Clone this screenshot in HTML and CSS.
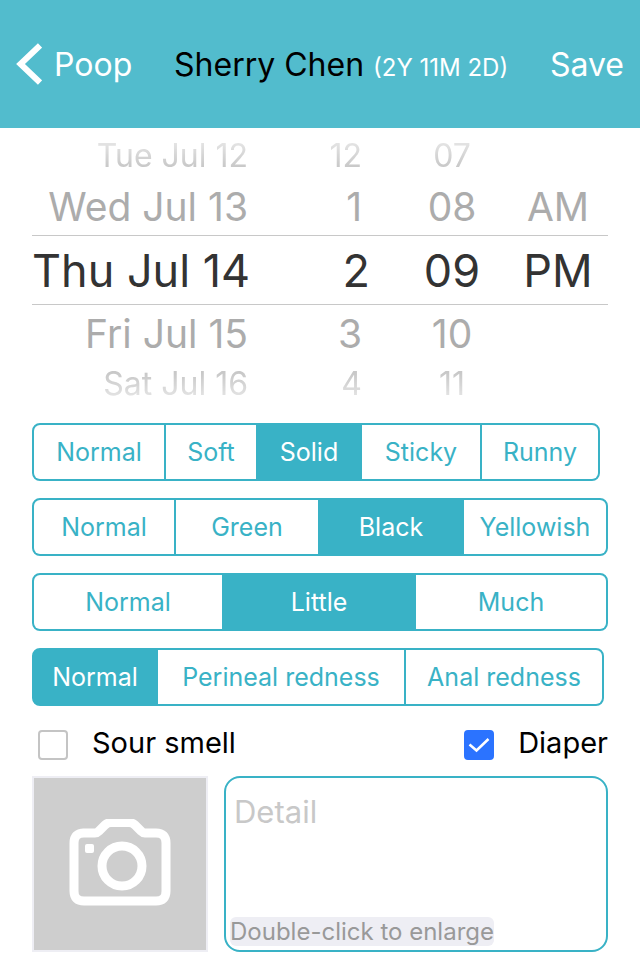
FILE: index.html
```
<!DOCTYPE html>
<html lang="en">
<head>
    <meta charset="UTF-8">
    <meta name="viewport" content="width=device-width, initial-scale=1">
    <title>Poop - Sherry Chen</title>
    <link rel="stylesheet" href="styles.css">
</head>
<body>
    <header class="navbar">
        <a href="#" class="back">
            <svg class="back-icon" viewBox="0 0 26 42" aria-hidden="true"><path d="M24 2.500 4.500 21 24 39.500" fill="none" stroke="#fff" stroke-width="6"/></svg>
            Poop
        </a>
        <h1>Sherry Chen <small>(2Y 11M 2D)</small></h1>
        <button type="button" class="save">Save</button>
    </header>

    <form class="record">
        <!-- date and time wheels -->
        <div class="picker">
            <ul class="wheel wheel-date" aria-label="Date">
                <li class="far above">Tue Jul 12</li>
                <li class="near">Wed Jul 13</li>
                <li class="current">Thu Jul 14</li>
                <li class="near">Fri Jul 15</li>
                <li class="far below">Sat Jul 16</li>
            </ul>
            <ul class="wheel wheel-hour" aria-label="Hour">
                <li class="far above">12</li>
                <li class="near">1</li>
                <li class="current">2</li>
                <li class="near">3</li>
                <li class="far below">4</li>
            </ul>
            <ul class="wheel" aria-label="Minute">
                <li class="far above">07</li>
                <li class="near">08</li>
                <li class="current">09</li>
                <li class="near">10</li>
                <li class="far below">11</li>
            </ul>
            <ul class="wheel" aria-label="AM or PM">
                <li class="far"></li>
                <li class="near">AM</li>
                <li class="current">PM</li>
                <li class="near"></li>
                <li class="far"></li>
            </ul>
        </div>

        <div class="segments texture" role="radiogroup" aria-label="Texture">
            <label><input type="radio" name="texture"><span>Normal</span></label>
            <label><input type="radio" name="texture"><span>Soft</span></label>
            <label><input type="radio" name="texture" checked><span>Solid</span></label>
            <label><input type="radio" name="texture"><span>Sticky</span></label>
            <label><input type="radio" name="texture"><span>Runny</span></label>
        </div>
        <div class="segments color" role="radiogroup" aria-label="Color">
            <label><input type="radio" name="color"><span>Normal</span></label>
            <label><input type="radio" name="color"><span>Green</span></label>
            <label><input type="radio" name="color" checked><span>Black</span></label>
            <label><input type="radio" name="color"><span>Yellowish</span></label>
        </div>
        <div class="segments amount" role="radiogroup" aria-label="Amount">
            <label><input type="radio" name="amount"><span>Normal</span></label>
            <label><input type="radio" name="amount" checked><span>Little</span></label>
            <label><input type="radio" name="amount"><span>Much</span></label>
        </div>
        <div class="segments skin" role="radiogroup" aria-label="Skin">
            <label><input type="radio" name="skin" checked><span>Normal</span></label>
            <label><input type="radio" name="skin"><span>Perineal redness</span></label>
            <label><input type="radio" name="skin"><span>Anal redness</span></label>
        </div>

        <div class="checks">
            <label><input type="checkbox" name="sour">Sour smell</label>
            <label><input type="checkbox" name="diaper" checked>Diaper</label>
        </div>

        <div class="notes">
            <button type="button" class="photo" aria-label="Add photo">
                <svg viewBox="0 1 102 90" aria-hidden="true">
                    <g fill="none" stroke="#fff" stroke-width="9" stroke-linejoin="round">
                        <path d="M14 15H26Q28 15 30 13L36 7Q39 4.500 42 4.500H60Q63 4.500 66 7L72 13Q74 15 76 15H87Q97 15 97 25V73Q97 83 87 83H15Q5 83 5 73V25Q5 15 15 15Z"/>
                        <circle cx="53" cy="48" r="20"/>
                    </g>
                    <rect x="16" y="26" width="9" height="9" rx="2" fill="#fff"/>
                </svg>
            </button>
            <div class="detail">
                <textarea name="detail" placeholder="Detail" aria-label="Detail"></textarea>
                <p class="hint">Double-click to enlarge</p>
            </div>
        </div>
    </form>
</body>
</html>
```
FILE: styles.css
```
* {
    margin: 0;
    padding: 0;
    box-sizing: border-box;
    font-family: Inter, "Liberation Sans", sans-serif;
    font-weight: 400;
}

body {
    background: #fff;
    color: #000;
}

/* top bar */
.navbar {
    height: 128px;
    padding: 0 16px;
    display: flex;
    align-items: center;
    justify-content: space-between;
    background: #52bccd;
    white-space: nowrap;
}
.back {
    display: flex;
    align-items: center;
    gap: 12px;
    color: #fff;
    font-size: 32px;
    text-decoration: none;
}
.back-icon {
    width: 26px;
    height: 42px;
}
.navbar h1 {
    font-size: 32px;
}
.navbar small {
    color: #fff;
    font-size: 24px;
}
.save {
    border: none;
    background: transparent;
    color: #fff;
    font-size: 32px;
    cursor: pointer;
}

.record {
    padding: 6px 32px 8px;
}

/* date and time wheels */
.picker {
    display: grid;
    grid-template-columns: 216fr 148fr 112fr 100fr;
    margin-bottom: 17px;
    white-space: nowrap;
}
.wheel {
    list-style: none;
    text-align: center;
    min-width: 0;
}
.wheel-date {
    text-align: right;
}
.wheel-hour {
    text-align: right;
}
.wheel-hour li {
    padding-right: 34px;
}
.wheel-hour .current {
    padding-right: 26px;
}
.far {
    height: 44px;
    line-height: 44px;
    font-size: 32px;
    color: #c8c8c8;
}
.above {
    -webkit-mask-image: linear-gradient(rgba(0, 0, 0, 0.3), #000 75%);
    mask-image: linear-gradient(rgba(0, 0, 0, 0.3), #000 75%);
}
.below {
    -webkit-mask-image: linear-gradient(#000 25%, rgba(0, 0, 0, 0.3));
    mask-image: linear-gradient(#000 25%, rgba(0, 0, 0, 0.3));
}
.near {
    height: 57px;
    line-height: 57px;
    font-size: 39px;
    color: #acacac;
}
.current {
    height: 70px;
    line-height: 70px;
    font-size: 45px;
    color: #333;
    border-top: 1px solid #c8c8c8;
    border-bottom: 1px solid #c8c8c8;
}

/* segmented choices */
.segments {
    display: grid;
    height: 58px;
    margin-bottom: 17px;
    border: 2px solid #39b2c6;
    border-radius: 8px;
    background: #39b2c6;
    overflow: hidden;
}
.texture {
    grid-template-columns: 130fr 92fr 104fr 120fr 118fr;
    margin-right: 8px;
}
.color {
    grid-template-columns: 140fr 144fr 144fr 144fr;
}
.amount {
    grid-template-columns: 188fr 192fr 192fr;
}
.skin {
    grid-template-columns: 122fr 248fr 198fr;
    margin-right: 4px;
}
.segments label {
    position: relative;
    min-width: 0;
    cursor: pointer;
}
.segments input {
    position: absolute;
    opacity: 0;
}
.segments span {
    display: block;
    height: 54px;
    line-height: 54px;
    text-align: center;
    font-size: 25px;
    background: #fff;
    color: #39b2c6;
    white-space: nowrap;
}
.segments label + label span {
    border-left: 2px solid #39b2c6;
}
.segments input:checked + span {
    background: #39b2c6;
    color: #fff;
}
.segments input:focus-visible + span {
    text-decoration: underline;
}

/* tick boxes */
.checks {
    display: flex;
    justify-content: space-between;
    height: 53px;
    padding-left: 6px;
}
.checks label {
    display: flex;
    align-items: center;
    height: 38px;
    gap: 24px;
    font-size: 29px;
}
.checks input {
    appearance: none;
    width: 30px;
    height: 30px;
    margin-top: 6px;
    border: 2px solid #c4c4c4;
    border-radius: 4px;
    background: #fff;
}
.checks input:checked {
    border-color: #2b73ff;
    background: #2b73ff url("data:image/svg+xml,%3Csvg xmlns='http://www.w3.org/2000/svg' viewBox='0 0 26 26'%3E%3Cpath d='M3.500 12.500 10.500 18.500 22.500 7' fill='none' stroke='white' stroke-width='2.500'/%3E%3C/svg%3E") center / 26px 26px no-repeat;
}

/* photo and detail */
.notes {
    display: flex;
    gap: 16px;
}
.photo {
    flex: none;
    width: 176px;
    height: 176px;
    display: flex;
    align-items: center;
    justify-content: center;
    border: 2px solid #eeeef4;
    background: #cecece;
    cursor: pointer;
}
.photo svg {
    width: 102px;
    height: 90px;
}
.detail {
    flex: 1;
    min-width: 0;
    display: flex;
    flex-direction: column;
    align-items: flex-start;
    padding: 4px;
    border: 2px solid #39b2c6;
    border-radius: 16px;
}
.detail textarea {
    flex: 1;
    width: 100%;
    padding: 11px 4px;
    border: none;
    outline: none;
    resize: none;
    background: transparent;
    font-size: 31px;
}
.detail textarea::placeholder {
    color: #c8c8c8;
}
.hint {
    height: 29px;
    line-height: 29px;
    border-radius: 6px;
    background: #eeeef4;
    color: #999;
    font-size: 24px;
    white-space: nowrap;
}
```
